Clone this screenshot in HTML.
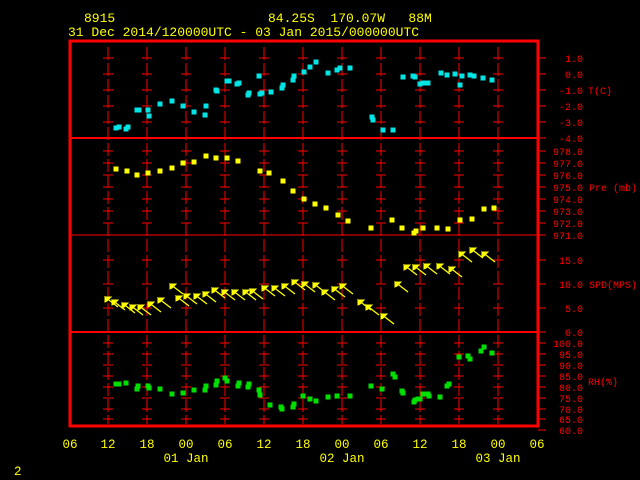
<!DOCTYPE html>
<html><head><meta charset="utf-8"><style>
html,body{margin:0;padding:0;background:#000;width:640px;height:480px;overflow:hidden}
svg{display:block}
text{font-family:"Liberation Mono",monospace}
</style></head><body>
<svg id="s" width="640" height="480" xmlns="http://www.w3.org/2000/svg">
<g fill="#ffff00" font-size="13">
<text x="84" y="22">8915</text>
<text x="268" y="22" xml:space="preserve">84.25S  170.07W   88M</text>
<text x="68" y="36">31 Dec 2014/120000UTC - 03 Jan 2015/000000UTC</text>
</g>
<g id="grid" stroke="#ff0000" stroke-width="1"></g>
<rect x="70" y="41" width="468" height="385" fill="none" stroke="#ff0000" stroke-width="3"/>
<g stroke="#ff0000">
<line x1="70" y1="138" x2="538" y2="138" stroke-width="2"/>
<line x1="70" y1="235" x2="538" y2="235" stroke-width="1"/>
<line x1="70" y1="332" x2="538" y2="332" stroke-width="2"/>
</g>
<g id="lab" fill="#ff0000" font-size="10" text-anchor="end"></g>
<g fill="#ff0000" font-size="10">
<text x="588" y="94">T(C)</text>
<text x="589" y="191">Pre (mb)</text>
<text x="589" y="288">SPD(MPS)</text>
<text x="588" y="385">RH(%)</text>
</g>
<g id="bot" fill="#ffff00" font-size="12.5" text-anchor="middle"></g>
<g fill="#ffff00" font-size="12.5" text-anchor="middle">
<text x="186" y="462">01 Jan</text>
<text x="342" y="462">02 Jan</text>
<text x="498" y="462">03 Jan</text>
</g>
<text x="14" y="475" fill="#ffff00" font-size="12.5">2</text>
<g id="data"></g>
</svg>
<script>
var NS="http://www.w3.org/2000/svg";
function el(p,t,a,txt){var e=document.createElementNS(NS,t);for(var k in a)e.setAttribute(k,a[k]);if(txt!=null)e.textContent=txt;document.getElementById(p).appendChild(e);return e;}
var xs=[108,147,186,225,264,303,342,381,420,459,498];
var ticks=[58,74,90,106,122,151,163,175,187,199,211,223,260,284,308,343,354,365,376,387,398,409,419];
xs.forEach(function(x){
 el("grid","line",{x1:x,y1:47,x2:x,y2:424,"stroke-dasharray":"13,3"});
 ticks.forEach(function(y){el("grid","line",{x1:x-5,y1:y,x2:x+5,y2:y});});
});
var labs=[[58,"1.0"],[74,"0.0"],[90,"-1.0"],[106,"-2.0"],[122,"-3.0"],[138,"-4.0"],
[151,"978.0"],[163,"977.0"],[175,"976.0"],[187,"975.0"],[199,"974.0"],[211,"973.0"],[223,"972.0"],[235,"971.0"],
[260,"15.0"],[284,"10.0"],[308,"5.0"],[332,"0.0"],
[343,"100.0"],[354,"95.0"],[365,"90.0"],[376,"85.0"],[387,"80.0"],[398,"75.0"],[409,"70.0"],[419,"65.0"],[430,"60.0"]];
labs.forEach(function(l){el("grid","line",{x1:538,y1:l[0],x2:546,y2:l[0]});el("lab","text",{x:583,y:l[0]+4},l[1]);});
var bx=[70,108,147,186,225,264,303,342,381,420,459,498,537],bl=["06","12","18","00","06","12","18","00","06","12","18","00","06"];
bx.forEach(function(x,i){el("bot","text",{x:x,y:448},bl[i]);});
function pts(a,c){a.forEach(function(p){el("data","rect",{x:p[0]-2.5,y:p[1]-2.5,width:5,height:5,fill:c});});}
pts([[116,128],[119,127],[126,129],[128,127],[137,110],[139,110],[148,110],[149,116],[160,104],[172,101],[183,106],[194,112],[206,106],[205,115],[216,90],[217,91],[227,81],[229,81],[237,84],[239,83],[248,95],[249,93],[259,76],[260,94],[262,93],[271,92],[282,88],[283,85],[293,80],[294,76],[304,72],[310,67],[316,62],[328,73],[337,70],[340,68],[350,68],[372,117],[373,120],[383,130],[393,130],[403,77],[413,76],[415,77],[420,84],[423,83],[428,83],[441,73],[447,75],[455,74],[460,85],[462,76],[470,75],[474,76],[483,78],[492,80]],"#00e5e5");
pts([[116,169],[127,171],[137,175],[148,173],[160,171],[172,168],[183,163],[194,162],[206,156],[216,158],[227,158],[238,161],[260,171],[269,173],[283,181],[293,191],[304,199],[315,204],[326,208],[338,215],[348,221],[371,228],[392,220],[402,228],[414,233],[416,231],[423,228],[437,228],[448,229],[460,220],[472,219],[484,209],[494,208]],"#ffff00");
pts([[116,384],[119,384],[126,383],[137,389],[138,386],[148,386],[149,388],[160,389],[172,394],[183,393],[194,390],[205,390],[206,386],[216,385],[217,381],[225,378],[227,381],[238,386],[239,383],[248,387],[249,384],[259,390],[260,395],[270,405],[281,407],[282,409],[293,407],[294,404],[303,396],[310,399],[316,401],[328,397],[337,396],[350,396],[371,386],[382,389],[393,374],[395,377],[402,391],[403,393],[414,402],[415,400],[418,399],[420,399],[423,394],[428,394],[429,396],[440,397],[447,386],[449,384],[459,357],[468,356],[470,359],[481,351],[484,347],[492,353]],"#00e000");
var w=[[105,297],[112,300],[122,303],[130,305],[138,305],[148,302],[158,298],[170,284],[176,296],[184,294],[194,294],[203,292],[212,288],[222,290],[232,290],[243,290],[250,289],[262,286],[272,286],[282,284],[292,280],[302,282],[313,283],[322,290],[332,287],[340,284],[358,300],[366,305],[381,314],[395,282],[404,265],[413,265],[424,264],[437,264],[449,267],[459,252],[470,248],[482,252]];
w.forEach(function(p){var x=p[0],y=p[1],tx=x+13,ty=y+10;
 el("data","path",{d:"M"+tx+" "+ty+"L"+x+" "+y,stroke:"#ffff00","stroke-width":"1.3",fill:"none"});
 el("data","path",{d:"M"+x+" "+y+"l6 0l-4 4l0 -1z M"+x+" "+y+"l0 5l3 -2z",stroke:"#ffff00","stroke-width":"1",fill:"#ffff00"});});
</script>
</body></html>
